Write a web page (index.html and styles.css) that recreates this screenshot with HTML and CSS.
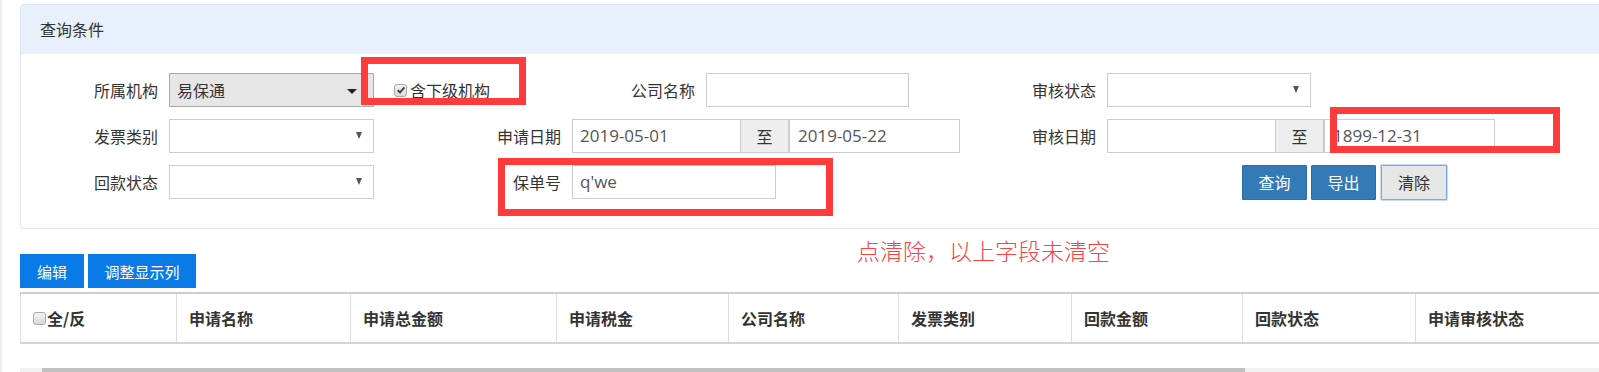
FILE: index.html
```html
<!DOCTYPE html>
<html lang="zh-CN">
<head>
<meta charset="utf-8">
<title>查询</title>
<link rel="stylesheet" href="styles.css">
</head>
<body>
<div class="page">
  <section class="panel">
    <div class="panel-head">查询条件</div>
    <div class="panel-body">
      <div class="form-grid">
        <!-- row 1 -->
        <div class="lbl">所属机构</div>
        <div class="select disabled"><span class="val">易保通</span><i class="caret wide"></i></div>
        <div class="mid">
          <span class="chk"><span class="box checked"><svg viewBox="0 0 12 12" width="10" height="10"><path d="M2 6.2 L4.8 9 L10 2.8" fill="none" stroke="#3a3a3a" stroke-width="2.2"/></svg></span>含下级机构</span>
          <span class="lbl">公司名称</span>
          <span class="input w203"></span>
        </div>
        <div class="lbl">审核状态</div>
        <div class="select w204"><i class="caret"></i></div>

        <!-- row 2 -->
        <div class="lbl">发票类别</div>
        <div class="select"><i class="caret"></i></div>
        <div class="lbl">申请日期</div>
        <div class="dates">
          <span class="input d1">2019-05-01</span><span class="addon">至</span><span class="input d2">2019-05-22</span>
        </div>
        <div class="lbl">审核日期</div>
        <div class="dates">
          <span class="input d1"></span><span class="addon">至</span><span class="input d2">1899-12-31</span>
        </div>

        <!-- row 3 -->
        <div class="lbl">回款状态</div>
        <div class="select"><i class="caret"></i></div>
        <div class="lbl">保单号</div>
        <div><span class="input w204">q'we</span></div>
        <div class="actions">
          <button class="btn primary">查询</button>
          <button class="btn primary">导出</button>
          <button class="btn plain">清除</button>
        </div>
      </div>
    </div>
  </section>

  <div class="toolbar">
    <button class="tbtn">编辑</button>
    <button class="tbtn">调整显示列</button>
  </div>

  <table class="grid">
    <thead>
      <tr>
        <th class="c0"><span class="box"></span>全/反</th>
        <th class="c1">申请名称</th>
        <th class="c2">申请总金额</th>
        <th class="c3">申请税金</th>
        <th class="c4">公司名称</th>
        <th class="c5">发票类别</th>
        <th class="c6">回款金额</th>
        <th class="c7">回款状态</th>
        <th class="c8">申请审核状态</th>
      </tr>
    </thead>
  </table>

  <div class="hscroll"><div class="thumb"></div></div>

  <div class="mark m1"></div>
  <div class="mark m2"></div>
  <div class="mark m3"></div>
  <div class="note">点清除，以上字段未清空</div>
</div>
</body>
</html>
```

FILE: styles.css
```css
* { box-sizing: border-box; }
html, body { margin: 0; padding: 0; }
body {
  width: 1599px;
  height: 372px;
  overflow: hidden;
  background: #fff;
  color: #333;
  font-family: "Noto Sans CJK SC", "Microsoft YaHei", sans-serif;
  font-size: 16px;
}
.page {
  position: relative;
  height: 372px;
  border-left: 2px solid #efefef;
  padding: 4px 0 0 18px;
}

/* panel */
.panel {
  border: 1px solid #dde7f2;
  border-right: none;
  border-radius: 4px 0 0 4px;
  margin-right: -2px;
}
.panel-head {
  height: 49px;
  line-height: 49px;
  padding-left: 19px;
  background: #e8f1fb;
  font-size: 16px;
  color: #333;
}
.panel-body {
  padding: 19px 0 29px 0;
}
.form-grid {
  display: grid;
  grid-template-columns: 137px 205px 176px 433px 80px 1fr;
  grid-auto-rows: 34px;
  column-gap: 11px;
  row-gap: 12px;
  align-items: center;
}
.lbl {
  text-align: right;
  white-space: nowrap;
  font-size: 16px;
  line-height: 34px;
}
.mid {
  grid-column: 3 / span 2;
  display: grid;
  grid-template-columns: 310px 203px;
  column-gap: 11px;
  align-items: center;
  position: relative;
}
.mid .chk {
  position: absolute;
  left: 9px;
  top: 0;
  line-height: 34px;
}
.mid .lbl { grid-column: 1; }
.mid .input { grid-column: 2; }

.chk {
  display: inline-flex;
  align-items: center;
  font-size: 16px;
  white-space: nowrap;
}
.box {
  display: inline-flex;
  align-items: center;
  justify-content: center;
  width: 13px;
  height: 13px;
  border: 1px solid #a9a9a9;
  border-radius: 3px;
  background: linear-gradient(#f3f3f3, #d9d9d9);
  margin-right: 3px;
  vertical-align: middle;
}

.select, .input {
  display: block;
  height: 34px;
  border: 1px solid #ccc;
  background: #fff;
  position: relative;
  font-family: "Open Sans", "Noto Sans CJK SC", sans-serif;
  font-size: 17px;
  line-height: 32px;
  padding-left: 7px;
  color: #555;
}
.select { width: 205px; }
.select.w204, .input.w204 { width: 204px; }
.input.w203 { width: 203px; }
.select.disabled {
  background: #e6e6e6;
  border-color: #aaa;
}
.select .val {
  font-family: "Noto Sans CJK SC", sans-serif;
  font-size: 16px;
  color: #333;
}
.caret {
  position: absolute;
  right: 11px;
  top: 12px;
  width: 0;
  height: 0;
  border-left: 3.5px solid transparent;
  border-right: 3.5px solid transparent;
  border-top: 7px solid #555;
}
.caret.wide {
  right: 16px;
  top: 15px;
  border-left-width: 5px;
  border-right-width: 5px;
  border-top-width: 5px;
  border-top-color: #222;
}

.dates {
  display: flex;
  width: 388px;
}
.dates .d1 { width: 169px; }
.dates .d2 { width: 170px; border-left: none; padding-left: 8px; }
.addon {
  width: 49px;
  height: 34px;
  border: 1px solid #ccc;
  border-left: none;
  border-right: 2px solid #ccc;
  background: #eee;
  text-align: center;
  line-height: 32px;
  font-size: 16px;
  color: #333;
}

.actions {
  grid-column: 6;
  display: flex;
  gap: 4px;
  padding-left: 135px;
}
.btn {
  height: 35px;
  width: 65px;
  border: 1px solid #2e6da4;
  font-family: "Noto Sans CJK SC", sans-serif;
  font-size: 16px;
  padding: 0;
  border-radius: 1px;
}
.btn.primary { background: #337ab7; color: #fff; }
.btn.plain {
  width: 66px;
  margin-left: 1px;
  background: #e6e6e6;
  color: #333;
  border-color: #7aa7e6;
  box-shadow: 0 0 0 1px #c7dbf5;
}

/* toolbar */
.toolbar {
  display: flex;
  gap: 4px;
  margin-top: 25px;
  height: 34px;
}
.tbtn {
  height: 34px;
  border: none;
  background: #0a7be6;
  color: #fff;
  font-family: "Noto Sans CJK SC", sans-serif;
  font-size: 15px;
  padding: 0;
}
.tbtn:first-child { width: 64px; }
.tbtn:last-child { width: 108px; }

/* table */
.grid {
  margin-top: 4px;
  border-collapse: collapse;
  table-layout: fixed;
  width: 1600px;
}
.grid th {
  height: 50px;
  border-top: 2px solid #ccc;
  border-bottom: 2px solid #d4d4d4;
  border-left: 1px solid #ddd;
  text-align: left;
  font-weight: bold;
  font-size: 16px;
  color: #333;
  padding: 0 0 0 12px;
  white-space: nowrap;
}
.grid th.c0 { width: 156px; padding-left: 12px; }
.grid th.c0 .box { margin-right: 1px; position: relative; top: -2px; }
.grid th.c1 { width: 174px; }
.grid th.c2 { width: 206px; }
.grid th.c3 { width: 172px; }
.grid th.c4 { width: 170px; }
.grid th.c5 { width: 173px; }
.grid th.c6 { width: 171px; }
.grid th.c7 { width: 173px; }
.grid th.c8 { width: 205px; }

.hscroll {
  margin-top: 24px;
  height: 12px;
  background: #f1f1f1;
  padding-left: 22px;
}
.hscroll .thumb {
  width: 1203px;
  height: 12px;
  background: #c1c1c1;
}

/* annotations */
.mark {
  position: absolute;
  border: 7px solid #ff3b3b;
}
.m1 { left: 359px; top: 57px; width: 165px; height: 48px; }
.m2 { left: 496px; top: 158px; width: 335px; height: 58px; }
.m3 { left: 1328px; top: 107px; width: 230px; height: 46px; }
.note {
  position: absolute;
  left: 855px;
  top: 236px;
  font-size: 23px;
  line-height: 28px;
  color: #ff4040;
  font-family: "Noto Sans CJK SC", sans-serif;
  font-weight: 300;
  white-space: nowrap;
}
```
